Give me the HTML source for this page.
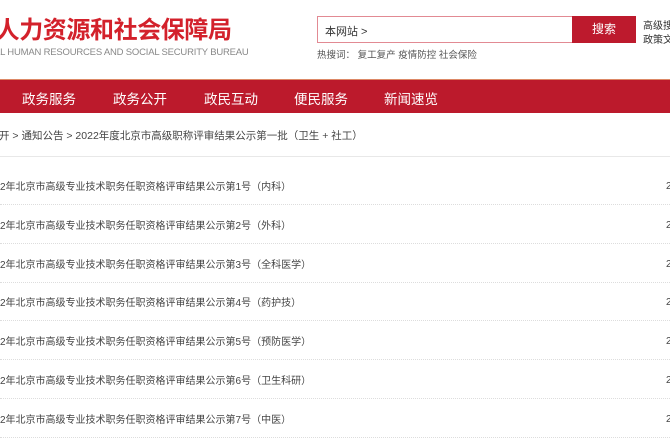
<!DOCTYPE html>
<html><head><meta charset="utf-8"><style>
*{margin:0;padding:0;box-sizing:border-box}
body{width:670px;height:446px;overflow:hidden;background:#fff;font-family:"Liberation Sans","Noto Sans CJK SC",sans-serif;position:relative;color:#333}
.a{position:absolute;white-space:nowrap}
.title{left:-28px;top:10px;font-size:24px;font-weight:bold;color:#d3212b;letter-spacing:-0.4px}
.en{left:-6px;top:47px;font-size:9.5px;color:#888;letter-spacing:-0.2px}
.sbox{left:317px;top:16px;width:256px;height:27px;border:1px solid #e28a93;font-size:11px;padding:6px 0 0 7px;color:#333}
.sbtn{left:572px;top:16px;width:64px;height:27px;background:#bd1a2d;color:#fff;font-size:12px;text-align:center;line-height:27px}
.rt{left:643px;font-size:10px;color:#333}
.hot{left:317px;top:47px;font-size:9.5px;color:#555}
.nav{left:0;top:79px;width:670px;height:34px;background:#bc1a2c;border-top:1px solid #d86}
.nav span{position:absolute;top:8px;color:#fff;font-size:13.5px}
.bc{left:-1px;top:128px;font-size:10.5px;color:#444}
.line{left:0;top:156px;width:670px;height:1px;background:#e8e8e8}
.row{left:0;font-size:10px;color:#444}
.dot{left:0;width:670px;border-top:1px dotted #ddd}
.d{left:666px;font-size:10px;color:#444}
</style></head><body>
<div class="a title">市人力资源和社会保障局</div>
<div class="a en">AL HUMAN RESOURCES AND SOCIAL SECURITY BUREAU</div>
<div class="a sbox">本网站 &gt;</div>
<div class="a sbtn">搜索</div>
<div class="a rt" style="top:17px">高级搜</div>
<div class="a rt" style="top:31px">政策文</div>
<div class="a hot">热搜词：&nbsp;复工复产 疫情防控 社会保险</div>
<div class="a nav"><span style="left:22px">政务服务</span><span style="left:113px">政务公开</span><span style="left:204px">政民互动</span><span style="left:294px">便民服务</span><span style="left:384px">新闻速览</span></div>
<div class="a bc">开 &gt; 通知公告 &gt; 2022年度北京市高级职称评审结果公示第一批（卫生 + 社工）</div>
<div class="a line"></div>
<div class="a row" style="top:178px">2年北京市高级专业技术职务任职资格评审结果公示第1号（内科）</div>
<div class="a dot" style="top:204px"></div>
<div class="a row" style="top:217px">2年北京市高级专业技术职务任职资格评审结果公示第2号（外科）</div>
<div class="a dot" style="top:243px"></div>
<div class="a row" style="top:256px">2年北京市高级专业技术职务任职资格评审结果公示第3号（全科医学）</div>
<div class="a dot" style="top:282px"></div>
<div class="a row" style="top:294px">2年北京市高级专业技术职务任职资格评审结果公示第4号（药护技）</div>
<div class="a dot" style="top:320px"></div>
<div class="a row" style="top:333px">2年北京市高级专业技术职务任职资格评审结果公示第5号（预防医学）</div>
<div class="a dot" style="top:359px"></div>
<div class="a row" style="top:372px">2年北京市高级专业技术职务任职资格评审结果公示第6号（卫生科研）</div>
<div class="a dot" style="top:398px"></div>
<div class="a row" style="top:411px">2年北京市高级专业技术职务任职资格评审结果公示第7号（中医）</div>
<div class="a dot" style="top:437px"></div>
<div class="a d" style="top:181px">2</div><div class="a d" style="top:220px">2</div><div class="a d" style="top:259px">2</div><div class="a d" style="top:297px">2</div><div class="a d" style="top:336px">2</div><div class="a d" style="top:375px">2</div><div class="a d" style="top:414px">2</div>
</body></html>
